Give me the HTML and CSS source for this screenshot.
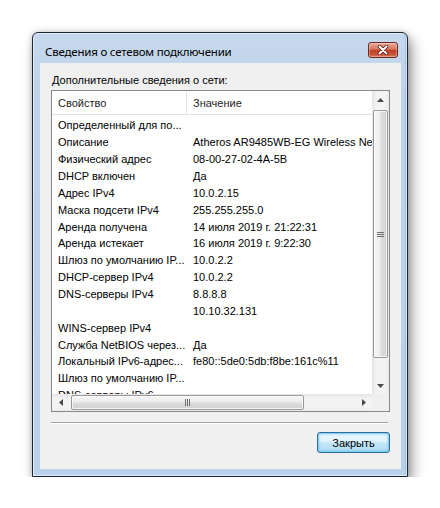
FILE: index.html
```html
<!DOCTYPE html>
<html lang="ru">
<head>
<meta charset="utf-8">
<title>Сведения о сетевом подключении</title>
<link rel="stylesheet" href="styles.css">
</head>
<body>
<div class="window">
  <div class="titlebar">
    <span class="title">Сведения о сетевом подключении</span>
    <div class="close">
      <svg width="12" height="10" viewBox="0 0 12 10">
        <path d="M2.5 1.5 L9.5 8.5 M9.5 1.5 L2.5 8.5" stroke="#5a2018" stroke-width="3.6" stroke-linecap="round"/>
        <path d="M2.5 1.5 L9.5 8.5 M9.5 1.5 L2.5 8.5" stroke="#ffffff" stroke-width="2" stroke-linecap="round"/>
      </svg>
    </div>
  </div>
  <div class="client">
    <div class="label">Дополнительные сведения о сети:</div>
    <div class="list">
      <div class="view">
        <div class="header">
          <div class="hcell c1">Свойство</div>
          <div class="hcell c2">Значение</div>
        </div>
        <div class="rows">
          <div class="row"><span class="c1">Определенный для по...</span><span class="c2"></span></div>
          <div class="row"><span class="c1">Описание</span><span class="c2">Atheros AR9485WB-EG Wireless Network Adapter</span></div>
          <div class="row"><span class="c1">Физический адрес</span><span class="c2">08-00-27-02-4A-5B</span></div>
          <div class="row"><span class="c1">DHCP включен</span><span class="c2">Да</span></div>
          <div class="row"><span class="c1">Адрес IPv4</span><span class="c2">10.0.2.15</span></div>
          <div class="row"><span class="c1">Маска подсети IPv4</span><span class="c2">255.255.255.0</span></div>
          <div class="row"><span class="c1">Аренда получена</span><span class="c2">14 июля 2019 г. 21:22:31</span></div>
          <div class="row"><span class="c1">Аренда истекает</span><span class="c2">16 июля 2019 г. 9:22:30</span></div>
          <div class="row"><span class="c1">Шлюз по умолчанию IP...</span><span class="c2">10.0.2.2</span></div>
          <div class="row"><span class="c1">DHCP-сервер IPv4</span><span class="c2">10.0.2.2</span></div>
          <div class="row"><span class="c1">DNS-серверы IPv4</span><span class="c2">8.8.8.8</span></div>
          <div class="row"><span class="c1"></span><span class="c2">10.10.32.131</span></div>
          <div class="row"><span class="c1">WINS-сервер IPv4</span><span class="c2"></span></div>
          <div class="row"><span class="c1">Служба NetBIOS через...</span><span class="c2">Да</span></div>
          <div class="row"><span class="c1">Локальный IPv6-адрес...</span><span class="c2">fe80::5de0:5db:f8be:161c%11</span></div>
          <div class="row"><span class="c1">Шлюз по умолчанию IP...</span><span class="c2"></span></div>
          <div class="row"><span class="c1">DNS-серверы IPv6</span><span class="c2"></span></div>
        </div>
      </div>
      <div class="vscroll">
        <div class="sbtn">
          <svg width="7" height="4" viewBox="0 0 7 4"><polygon points="0,4 3.5,0 7,4" fill="#4a4a4a"/></svg>
        </div>
        <div class="vtrack">
          <div class="vthumb">
            <svg width="7" height="7" viewBox="0 0 7 7">
              <path d="M0 1.5H7M0 3.5H7M0 5.5H7" stroke="#6e6e6e" stroke-width="1"/>
            </svg>
          </div>
        </div>
        <div class="sbtn">
          <svg width="7" height="4" viewBox="0 0 7 4"><polygon points="0,0 7,0 3.5,4" fill="#4a4a4a"/></svg>
        </div>
      </div>
      <div class="hscroll">
        <div class="sbtn">
          <svg width="4" height="7" viewBox="0 0 4 7"><polygon points="4,0 4,7 0,3.5" fill="#4a4a4a"/></svg>
        </div>
        <div class="htrack">
          <div class="hthumb">
            <svg width="7" height="7" viewBox="0 0 7 7">
              <path d="M1.5 0V7M3.5 0V7M5.5 0V7" stroke="#6e6e6e" stroke-width="1"/>
            </svg>
          </div>
        </div>
        <div class="sbtn">
          <svg width="4" height="7" viewBox="0 0 4 7"><polygon points="0,0 4,3.5 0,7" fill="#4a4a4a"/></svg>
        </div>
      </div>
      <div class="corner"></div>
    </div>
    <div class="sep"></div>
    <div class="buttons">
      <button class="btn">Закрыть</button>
    </div>
  </div>
</div>
</body>
</html>
```

FILE: styles.css
```css
html, body {
  margin: 0;
  padding: 0;
  background: #ffffff;
}

body {
  font-family: "Liberation Sans", Arial, sans-serif;
  font-size: 11px;
  color: #000000;
}

.window {
  box-sizing: border-box;
  width: 376px;
  height: 445px;
  margin: 32px 0 0 32px;
  border: 1px solid #1d2733;
  border-radius: 6px 6px 0 0;
  background: linear-gradient(to bottom, #c6d8ed 0px, #bfd3ea 60px, #bad1ea 100%);
  padding: 0 6px 7px 7px;
  display: flex;
  flex-direction: column;
  box-shadow: inset 0 0 0 1px rgba(255, 255, 255, 0.55), inset -2px 0 0 0 rgba(120, 160, 205, 0.35), 4px 7px 14px rgba(0, 0, 0, 0.4), 0 0 6px rgba(0, 0, 0, 0.18);
}

.titlebar {
  flex: none;
  height: 30px;
  display: flex;
  justify-content: space-between;
  align-items: flex-start;
  padding: 0 3px 0 5px;
}

.title {
  margin-top: 11px;
  font-family: "Noto Sans", "Open Sans", sans-serif;
  font-size: 11.5px;
  letter-spacing: -0.2px;
  line-height: 16px;
  color: #000000;
}

.close {
  box-sizing: border-box;
  width: 30px;
  height: 16px;
  margin-top: 9px;
  border: 1px solid #6b2a20;
  border-radius: 3px;
  background: linear-gradient(to bottom, #eaa99b 0%, #d6765e 45%, #c23f25 52%, #c65034 80%, #da7d5c 100%);
  box-shadow: inset 0 0 0 1px rgba(255, 255, 255, 0.3);
  display: flex;
  align-items: center;
  justify-content: center;
}

.client {
  flex: 1;
  box-sizing: border-box;
  background: #f0f0f0;
  display: flex;
  flex-direction: column;
  padding: 11px 11px 16px 11px;
}

.label {
  line-height: 13px;
  padding-left: 1px;
  white-space: nowrap;
}

.list {
  margin-top: 3px;
  height: 322px;
  box-sizing: border-box;
  border: 1px solid #828790;
  background: #ffffff;
  display: grid;
  grid-template-columns: 1fr 17px;
  grid-template-rows: 1fr 17px;
}

.view {
  overflow: hidden;
  min-width: 0;
  min-height: 0;
}

.header {
  box-sizing: border-box;
  height: 24px;
  border-bottom: 1px solid #e2e4e7;
  display: flex;
  color: #1e1e1e;
}

.hcell {
  box-sizing: border-box;
  padding-top: 6px;
  line-height: 13px;
  white-space: nowrap;
}

.hcell.c1 {
  width: 135px;
  padding-left: 6px;
  border-right: 1px solid #e2e4e7;
}

.hcell.c2 {
  padding-left: 6px;
}

.rows {
  padding-top: 2.4px;
}

.row {
  display: flex;
  height: 16.86px;
  line-height: 16.86px;
  white-space: nowrap;
}

.row .c1 {
  flex: none;
  box-sizing: border-box;
  width: 135px;
  padding-left: 6px;
}

.row .c2 {
  flex: none;
  padding-left: 6px;
}

.vscroll {
  display: flex;
  flex-direction: column;
  background: linear-gradient(to right, #e6e6e6 0%, #f4f4f4 30%, #f4f4f4 75%, #ebebeb 100%);
}

.hscroll {
  display: flex;
  background: linear-gradient(to bottom, #e6e6e6 0%, #f4f4f4 30%, #f4f4f4 75%, #ebebeb 100%);
}

.sbtn {
  flex: none;
  width: 17px;
  height: 17px;
  display: flex;
  align-items: center;
  justify-content: center;
}

.vtrack {
  flex: 1;
  padding-top: 2px;
}

.vthumb {
  box-sizing: border-box;
  height: 248px;
  margin: 0 1px 0 1px;
  border: 1px solid #999999;
  border-radius: 2px;
  background: linear-gradient(to right, #f7f7f7 0%, #ececec 45%, #dcdcdc 55%, #d2d2d2 100%);
  box-shadow: inset 0 0 0 1px rgba(255, 255, 255, 0.7);
  display: flex;
  align-items: center;
  justify-content: center;
}

.htrack {
  flex: 1;
  padding-left: 2px;
}

.hthumb {
  box-sizing: border-box;
  width: 233px;
  height: 15px;
  margin-top: 1px;
  border: 1px solid #999999;
  border-radius: 2px;
  background: linear-gradient(to bottom, #f7f7f7 0%, #ececec 45%, #dcdcdc 55%, #d2d2d2 100%);
  box-shadow: inset 0 0 0 1px rgba(255, 255, 255, 0.7);
  display: flex;
  align-items: center;
  justify-content: center;
}

.corner {
  background: #f0f0f0;
}

.sep {
  margin-top: 10px;
  margin-right: 2px;
  height: 1px;
  background: #a0a0a0;
  box-shadow: 0 1px 0 #ffffff;
}

.buttons {
  display: flex;
  justify-content: flex-end;
  margin-top: 9px;
}

.btn {
  box-sizing: border-box;
  width: 73px;
  height: 21px;
  margin: 0;
  padding: 0;
  font-family: "Liberation Sans", Arial, sans-serif;
  font-size: 11px;
  color: #000000;
  border: 1px solid #2f6f9f;
  border-radius: 3px;
  background: linear-gradient(to bottom, #eef8fd 0%, #dff2fc 45%, #c6e8f9 50%, #addcf4 100%);
  box-shadow: inset 0 0 0 1px rgba(130, 205, 245, 0.9), inset 0 0 3px 1px rgba(90, 180, 235, 0.6);
}
```
